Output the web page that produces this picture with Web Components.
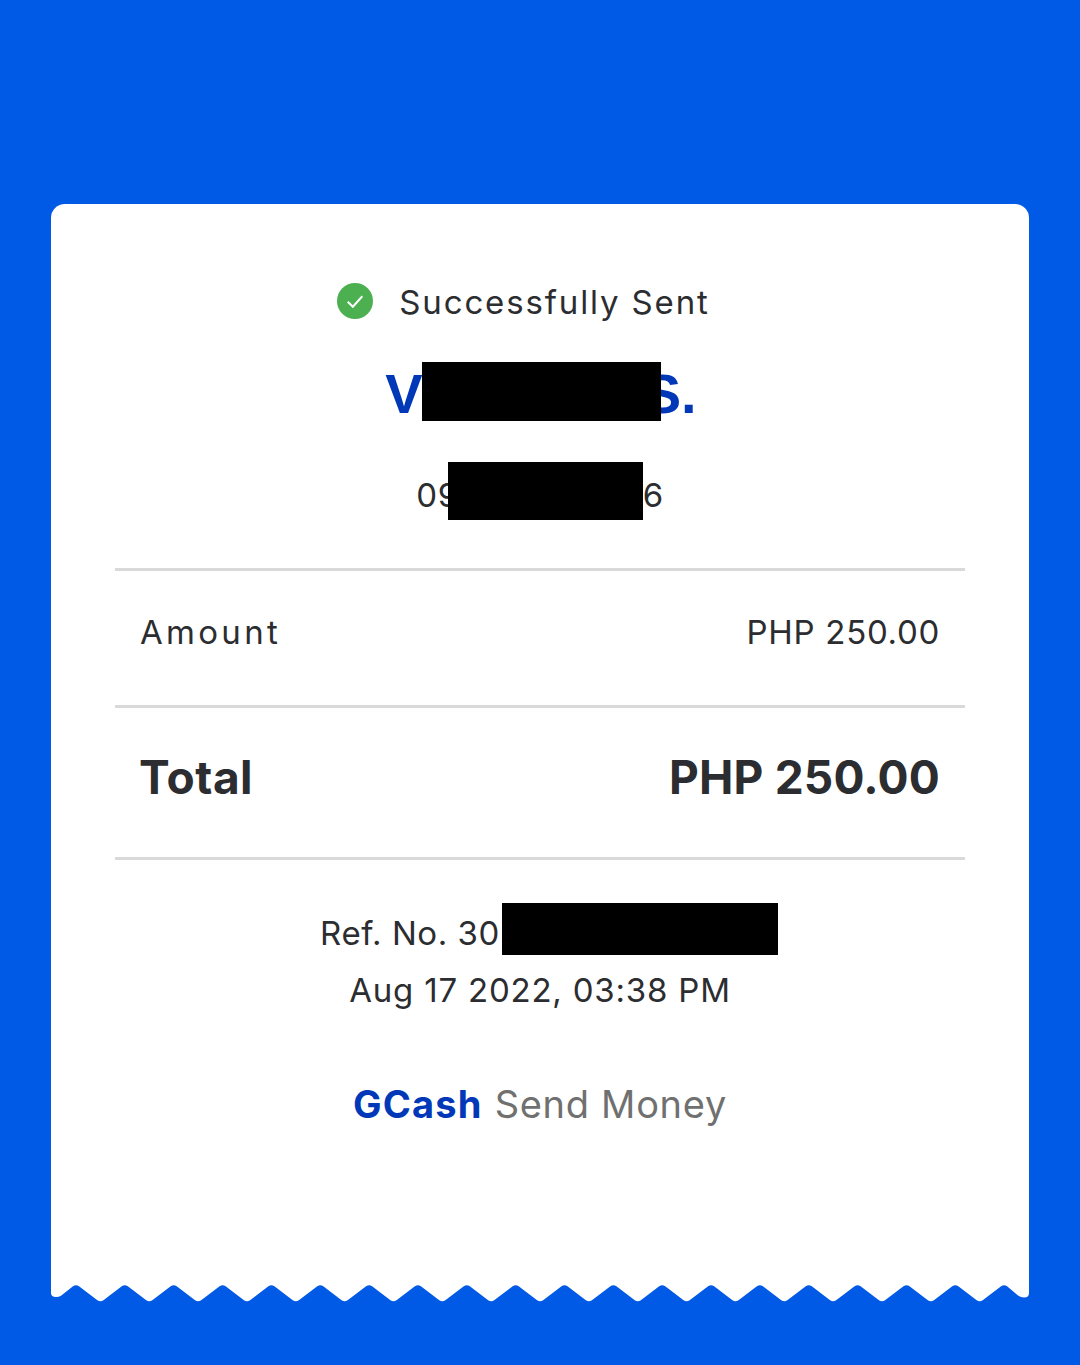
<!DOCTYPE html>
<html lang="en">
<head>
<meta charset="utf-8">
<title>GCash Send Money receipt</title>
<style>
  html, body { margin: 0; background: #005ae6; }
  body { font-family: Inter, "Liberation Sans", sans-serif; color: #2c2d30; }
</style>
</head>
<body>
<receipt-page>
  <status-line>Successfully Sent</status-line>
  <recipient-name>V<black-bar style="--w:239px;--h:59px;--ml:-1px;--mr:-17px;--shift:-8px"></black-bar>S.</recipient-name>
  <recipient-phone>09<black-bar style="--w:195px;--h:58px;--ml:-11px;--mr:0px;--shift:-13px"></black-bar>6</recipient-phone>
  <receipt-row label="Amount" value="PHP 250.00"></receipt-row>
  <receipt-row strong label="Total" value="PHP 250.00"></receipt-row>
  <receipt-meta>
    <div style="letter-spacing:.55px">Ref. No. 30<black-bar style="--w:276px;--h:52px;--ml:2px;--mr:-18px;--shift:-10px"></black-bar></div>
    <div>Aug 17 2022, 03:38 PM</div>
  </receipt-meta>
  <receipt-brand></receipt-brand>
</receipt-page>

<script>
const define = (name, css, html) => {
  customElements.define(name, class extends HTMLElement {
    constructor() {
      super()
      const root = this.attachShadow({ mode: 'open' })
      root.innerHTML = `<style>${css}</style>${typeof html === 'function' ? html(this) : html}`
    }
  })
}

// zigzag torn edge along the bottom of the paper
const tornEdge = () => {
  const period = 48.85
  let d = 'M0 0V8Q0 12 5 12Q8 12 10 10.8'
  for (let k = 0; k < 20; k++) {
    const peak = 25 + period * k
    const valley = peak + 24.4
    d += `L${(peak - 3).toFixed(1)} 1.3Q${peak.toFixed(1)} -1 ${(peak + 3).toFixed(1)} 1.3`
    if (k < 19) d += `L${(valley - 3).toFixed(1)} 15.2Q${valley.toFixed(1)} 17.5 ${(valley + 3).toFixed(1)} 15.2`
  }
  d += 'L967 10.5Q970 12.5 973 12.5Q978 12.5 978 8V0Z'
  return d
}

define('receipt-page', `
  :host { display: block; padding: 204px 51px 0; }
  .paper { background: #fff; border-radius: 14px 14px 0 0; height: 1081px; padding: 78px 64px 0; box-sizing: border-box; display: flex; flex-direction: column; }
  svg { display: block; width: 978px; height: 18px; overflow: visible; }
`, `
  <div class="paper"><slot></slot></div>
  <svg viewBox="0 0 978 18" aria-hidden="true"><path fill="#fff" d="${tornEdge()}"/></svg>
`)

define('status-line', `
  :host { display: flex; align-items: center; justify-content: center; gap: 26px; height: 40px; padding-right: 33px; font-size: 33px; letter-spacing: 1.85px; color: #2c2d30; }
  svg { width: 36px; height: 36px; flex: none; margin-top: -2px; }
`, `
  <svg viewBox="0 0 37 37" aria-hidden="true"><circle cx="18.5" cy="18.5" r="18.5" fill="#4caf50"/><path d="M11 19.2l5.3 5.2L26 13.6" fill="none" stroke="#fff" stroke-width="2"/></svg>
  <span><slot></slot></span>
`)

define('recipient-name', `
  :host { display: block; margin-top: 40px; height: 60px; padding-left: 2px; text-align: center; font: 700 56px/60px "Liberation Sans", Arial, sans-serif; color: #0038b8; white-space: nowrap; }
`, '<slot></slot>')

define('recipient-phone', `
  :host { display: block; margin: 40px 0 66px; height: 40px; line-height: 40px; text-align: center; font-size: 33px; letter-spacing: 0.5px; white-space: nowrap; }
`, '<slot></slot>')

define('black-bar', `
  :host { display: inline-block; position: relative; width: var(--w); height: var(--h); margin: 0 var(--mr) 0 var(--ml); background: #000; vertical-align: var(--shift); z-index: 1; }
`, '')

define('receipt-row', `
  :host { display: flex; justify-content: space-between; align-items: center; box-sizing: border-box; height: 137px; padding: 0 25px 12px; border-top: 3px solid #d9d9d9; font-size: 33px; }
  .label { letter-spacing: 3.3px; margin-right: -3px; }
  .value { letter-spacing: .7px; }
  :host([strong]) { height: 155px; padding-bottom: 11px; border-bottom: 3px solid #d9d9d9; font-size: 46px; font-weight: 700; }
  :host([strong]) .label { letter-spacing: .5px; margin-right: 0; margin-left: -1px; }
  :host([strong]) .value { letter-spacing: .2px; }
`, el => `<span class="label">${el.getAttribute('label')}</span><span class="value">${el.getAttribute('value')}</span>`)

define('receipt-meta', `
  :host { display: block; margin-top: 42.5px; text-align: center; font-size: 33px; letter-spacing: .8px; line-height: 57px; white-space: nowrap; }
`, '<slot></slot>')

define('receipt-brand', `
  :host { display: block; margin-top: 60px; text-align: center; font-size: 38px; letter-spacing: .7px; line-height: 50px; color: #707070; }
  b { color: #0038b8; font-weight: 700; letter-spacing: 1.2px; margin-right: 12px; }
`, '<b>GCash</b>Send Money')
</script>
</body>
</html>
